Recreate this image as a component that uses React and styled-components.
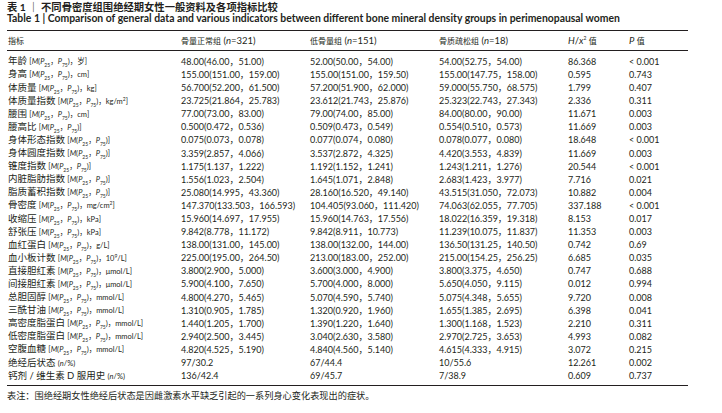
import styled, { createGlobalStyle } from "styled-components";

const GlobalStyle = createGlobalStyle`
  html, body {
    margin: 0;
    padding: 0;
    background: #ffffff;
  }
  body {
    font-family: "Lato", "Noto Sans CJK SC", sans-serif;
    color: #231f20;
  }
`;

const COLS = "173px 129px 129px 129px 61px 59px";

const rows = [
  ["年龄", "岁", "48.00(46.00，51.00)", "52.00(50.00，54.00)", "54.00(52.75，54.00)", "86.368", "< 0.001"],
  ["身高", "cm", "155.00(151.00，159.00)", "155.00(151.00，159.50)", "155.00(147.75，158.00)", "0.595", "0.743"],
  ["体质量", "kg", "56.700(52.200，61.500)", "57.200(51.900，62.000)", "59.000(55.750，68.575)", "1.799", "0.407"],
  ["体质量指数", <>kg/m<sup>2</sup></>, "23.725(21.864，25.783)", "23.612(21.743，25.876)", "25.323(22.743，27.343)", "2.336", "0.311"],
  ["腰围", "cm", "77.00(73.00，83.00)", "79.00(74.00，85.00)", "84.00(80.00，90.00)", "11.671", "0.003"],
  ["腰高比", null, "0.500(0.472，0.536)", "0.509(0.473，0.549)", "0.554(0.510，0.573)", "11.669", "0.003"],
  ["身体形态指数", null, "0.075(0.073，0.078)", "0.077(0.074，0.080)", "0.078(0.077，0.080)", "18.648", "< 0.001"],
  ["身体圆度指数", null, "3.359(2.857，4.066)", "3.537(2.872，4.325)", "4.420(3.553，4.839)", "11.669", "0.003"],
  ["锥度指数", null, "1.175(1.137，1.222)", "1.192(1.152，1.241)", "1.243(1.211，1.276)", "20.544", "< 0.001"],
  ["内脏脂肪指数", null, "1.556(1.023，2.504)", "1.645(1.071，2.848)", "2.683(1.423，3.977)", "7.716", "0.021"],
  ["脂质蓄积指数", null, "25.080(14.995，43.360)", "28.160(16.520，49.140)", "43.515(31.050，72.073)", "10.882", "0.004"],
  ["骨密度", <>mg/cm<sup>2</sup></>, "147.370(133.503，166.593)", "104.405(93.060，111.420)", "74.063(62.055，77.705)", "337.188", "< 0.001"],
  ["收缩压", "kPa", "15.960(14.697，17.955)", "15.960(14.763，17.556)", "18.022(16.359，19.318)", "8.153", "0.017"],
  ["舒张压", "kPa", "9.842(8.778，11.172)", "9.842(8.911，10.773)", "11.239(10.075，11.837)", "11.353", "0.003"],
  ["血红蛋白", "g/L", "138.00(131.00，145.00)", "138.00(132.00，144.00)", "136.50(131.25，140.50)", "0.742", "0.69"],
  ["血小板计数", <>10<sup>9</sup>/L</>, "225.00(195.00，264.50)", "213.00(183.00，252.00)", "215.00(154.25，256.25)", "6.685", "0.035"],
  ["直接胆红素", "μmol/L", "3.800(2.900，5.000)", "3.600(3.000，4.900)", "3.800(3.375，4.650)", "0.747", "0.688"],
  ["间接胆红素", "μmol/L", "5.900(4.100，7.650)", "5.700(4.000，8.000)", "5.650(4.050，9.115)", "0.012", "0.994"],
  ["总胆固醇", "mmol/L", "4.800(4.270，5.465)", "5.070(4.590，5.740)", "5.075(4.348，5.655)", "9.720", "0.008"],
  ["三酰甘油", "mmol/L", "1.310(0.905，1.785)", "1.320(0.920，1.960)", "1.655(1.385，2.695)", "6.398", "0.041"],
  ["高密度脂蛋白", "mmol/L", "1.440(1.205，1.700)", "1.390(1.220，1.640)", "1.300(1.168，1.523)", "2.210", "0.311"],
  ["低密度脂蛋白", "mmol/L", "2.940(2.500，3.445)", "3.040(2.630，3.580)", "2.970(2.725，3.653)", "4.993", "0.082"],
  ["空腹血糖", "mmol/L", "4.820(4.525，5.190)", "4.840(4.560，5.140)", "4.615(4.333，4.915)", "3.072", "0.215"],
];

const countRows = [
  ["绝经后状态", "97/30.2", "67/44.4", "10/55.6", "12.261", "0.002"],
  ["钙剂 / 维生素 D 服用史", "136/42.4", "69/45.7", "7/38.9", "0.609", "0.737"],
];

function Quartile({ name, unit }) {
  return (
    <>
      <Name>{name}</Name>{" "}
      <Unit>
        [<I>M</I>(<I>P</I><sub>25</sub>，<I>P</I><sub>75</sub>)
        {unit ? <>，{unit}</> : null}]
      </Unit>
    </>
  );
}

export default function App() {
  return (
    <Page>
      <GlobalStyle />
      <TitleCn>表 1 ｜ 不同骨密度组围绝经期女性一般资料及各项指标比较</TitleCn>
      <TitleEn>
        Table 1 | Comparison of general data and various indicators between different bone mineral density groups in perimenopausal women
      </TitleEn>
      <Table>
        <Head>
          <Cell><HeadCn>指标</HeadCn></Cell>
          <Cell><HeadCn>骨量正常组</HeadCn> (<I>n</I>=321)</Cell>
          <Cell><HeadCn>低骨量组</HeadCn> (<I>n</I>=151)</Cell>
          <Cell><HeadCn>骨质疏松组</HeadCn> (<I>n</I>=18)</Cell>
          <Cell><I>H</I>/<I>x</I><sup>2</sup> <HeadCn>值</HeadCn></Cell>
          <Cell><I>P</I> <HeadCn>值</HeadCn></Cell>
        </Head>
        <Body>
          {rows.map(([name, unit, ...vals]) => (
            <Row key={name}>
              <Cell><Quartile name={name} unit={unit} /></Cell>
              {vals.map((v, i) => <Cell key={i}>{v}</Cell>)}
            </Row>
          ))}
          {countRows.map(([name, ...vals]) => (
            <Row key={name}>
              <Cell><Name>{name}</Name> <Unit>(<I>n</I>/%)</Unit></Cell>
              {vals.map((v, i) => <Cell key={i}>{v}</Cell>)}
            </Row>
          ))}
        </Body>
      </Table>
      <Note>表注：围绝经期女性绝经后状态是因雌激素水平缺乏引起的一系列身心变化表现出的症状。</Note>
    </Page>
  );
}

const Page = styled.div`
  width: 722px;
  height: 413px;
  box-sizing: border-box;
  padding: 1px 0 0 7px;
  overflow: hidden;
`;

const TitleCn = styled.div`
  font-size: 10.3px;
  line-height: 12px;
  font-weight: 700;
  white-space: nowrap;
`;

const TitleEn = styled.div`
  font-size: 10.4px;
  line-height: 11px;
  font-weight: 700;
  white-space: nowrap;
`;

const Table = styled.div`
  margin-top: 6px;
  width: 681px;
  border-top: 1.3px solid #231f20;
  border-bottom: 1.3px solid #231f20;
`;

const Head = styled.div`
  display: grid;
  grid-template-columns: ${COLS};
  align-items: center;
  height: 19.4px;
  border-bottom: 0.8px solid #231f20;
  font-size: 9.5px;
`;

const HeadCn = styled.span`
  font-size: 8px;
`;

const Body = styled.div`
  padding: 3px 0;
`;

const Row = styled.div`
  display: grid;
  grid-template-columns: ${COLS};
  align-items: center;
  height: 13.1px;
  font-size: 9px;
`;

const Name = styled.span`
  font-size: 9.5px;
`;

const Unit = styled.span`
  font-size: 7.5px;
`;

const Cell = styled.div`
  padding-left: 1px;
  white-space: nowrap;
  line-height: 13px;

  sub, sup {
    font-size: 5px;
    line-height: 0;
  }
`;

const I = styled.i`
  font-style: italic;
`;

const Note = styled.div`
  margin-top: 4px;
  font-size: 9.2px;
  line-height: 12px;
  white-space: nowrap;
`;
